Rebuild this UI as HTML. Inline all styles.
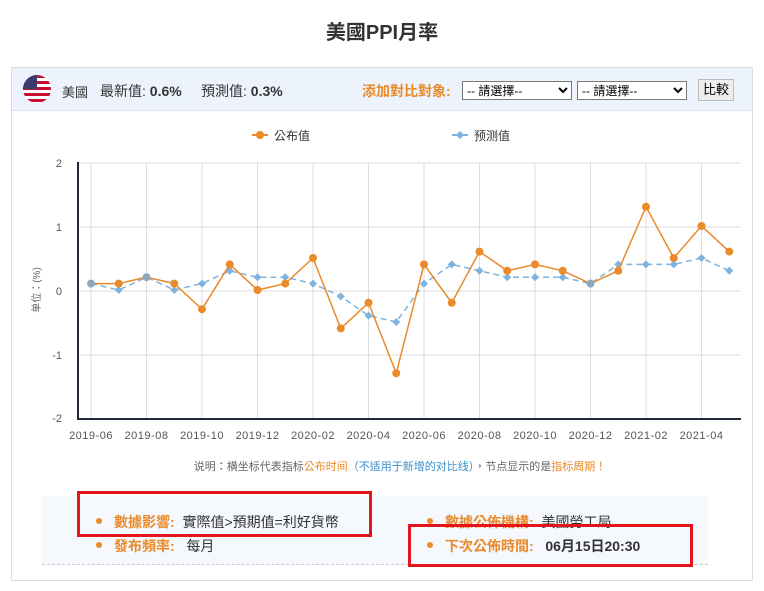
<!DOCTYPE html>
<html><head><meta charset="utf-8"><style>
body{margin:0;width:764px;height:591px;background:#fff;font-family:"Liberation Sans","Noto Sans CJK TC",sans-serif;position:relative;overflow:hidden}
.t{position:absolute;top:16px;left:0;width:764px;text-align:center;font-size:20px;font-weight:bold;color:#333}
.box{position:absolute;left:11px;top:67px;width:740px;height:512px;border:1px solid #d8dde6}
.hd{position:absolute;left:0;top:0;width:740px;height:42px;background:#edf3fc;border-bottom:1px solid #d8e2f0}
.a{position:absolute;font-size:14px;color:#333;white-space:nowrap}
select{position:absolute;height:19px;font-size:12px;border:1px solid #777;background:#fff;padding:0}
.btn{position:absolute;left:686px;top:11px;width:34px;height:20px;border:1px solid #bbb;background:#eee;font-size:13px;text-align:center;line-height:20px}
.info{position:absolute;background:#f5f8fd;border-bottom:1px dashed #ccc}
.o{color:#e98a2b;font-weight:bold}
.r{position:absolute;border:3px solid #e3141a}
.dot{display:inline-block;width:6px;height:6px;border-radius:50%;background:#e98a2b;margin-right:12px;vertical-align:3px}
</style></head><body>
<div class="t">美國PPI月率</div>
<div class="box">
<div class="hd">
<svg style="position:absolute;left:10px;top:6px" width="30" height="30"><defs><clipPath id="c"><circle cx="15" cy="15" r="14"/></clipPath></defs><g clip-path="url(#c)"><rect width="30" height="30" fill="#fff"/><rect y="1" width="30" height="3" fill="#c8102e"/><rect y="7" width="30" height="3" fill="#c8102e"/><rect y="13" width="30" height="3" fill="#c8102e"/><rect y="19" width="30" height="3" fill="#c8102e"/><rect y="25" width="30" height="3" fill="#c8102e"/><rect width="15" height="15" fill="#3c3b6e"/></g></svg>
<span class="a" style="left:50px;top:14px;font-size:13px">美國</span>
<span class="a" style="left:88px;top:13px">最新值: <b>0.6%</b></span>
<span class="a" style="left:189px;top:13px">預測值: <b>0.3%</b></span>
<span class="a o" style="left:350px;top:13px">添加對比對象:</span>
<select style="left:450px;top:13px;width:110px"><option>-- 請選擇--</option></select>
<select style="left:565px;top:13px;width:110px"><option>-- 請選擇--</option></select>
<div class="btn">比較</div>
</div>
</div>
<svg style="position:absolute;left:0;top:0" width="764" height="591" font-family="Liberation Sans,Noto Sans CJK TC,sans-serif">
<g stroke="#ddd" stroke-width="1">
<line x1="78" y1="163" x2="741" y2="163"/><line x1="78" y1="227" x2="741" y2="227"/><line x1="78" y1="291" x2="741" y2="291"/><line x1="78" y1="355" x2="741" y2="355"/>
<line x1="91" y1="163" x2="91" y2="418"/><line x1="146.5" y1="163" x2="146.5" y2="418"/><line x1="202" y1="163" x2="202" y2="418"/><line x1="257.5" y1="163" x2="257.5" y2="418"/><line x1="313" y1="163" x2="313" y2="418"/><line x1="368.5" y1="163" x2="368.5" y2="418"/><line x1="424" y1="163" x2="424" y2="418"/><line x1="479.5" y1="163" x2="479.5" y2="418"/><line x1="535" y1="163" x2="535" y2="418"/><line x1="590.5" y1="163" x2="590.5" y2="418"/><line x1="646" y1="163" x2="646" y2="418"/><line x1="701.5" y1="163" x2="701.5" y2="418"/>
</g>
<path d="M78 162V419H741" fill="none" stroke="#1f2a3c" stroke-width="2"/>
<g font-size="11" fill="#555" text-anchor="end"><text x="62" y="167">2</text><text x="62" y="231">1</text><text x="62" y="295">0</text><text x="62" y="359">-1</text><text x="62" y="422">-2</text></g>
<g font-size="11" fill="#555" text-anchor="middle" letter-spacing="0.5"><text x="91" y="439">2019-06</text><text x="146.5" y="439">2019-08</text><text x="202" y="439">2019-10</text><text x="257.5" y="439">2019-12</text><text x="313" y="439">2020-02</text><text x="368.5" y="439">2020-04</text><text x="424" y="439">2020-06</text><text x="479.5" y="439">2020-08</text><text x="535" y="439">2020-10</text><text x="590.5" y="439">2020-12</text><text x="646" y="439">2021-02</text><text x="701.5" y="439">2021-04</text></g>
<text transform="translate(40,290) rotate(-90)" font-size="10" fill="#666" text-anchor="middle">单位：(%)</text>
<line x1="252" y1="135" x2="268" y2="135" stroke="#e98a2b" stroke-width="2"/><circle cx="260" cy="135" r="4" fill="#e98a2b"/><text x="274" y="140" font-size="12" fill="#333">公布值</text>
<line x1="452" y1="135" x2="468" y2="135" stroke="#7fb3df" stroke-width="2"/><path d="M460 131l4 4-4 4-4-4z" fill="#7fb3df"/><text x="474" y="140" font-size="12" fill="#333">预测值</text>
<polyline fill="none" stroke="#7fb3df" stroke-width="1.5" stroke-dasharray="6,4" points="91,283.6 118.75,290 146.5,277.2 174.25,290 202,283.6 229.75,270.8 257.5,277.2 285.25,277.2 313,283.6 340.75,296.4 368.5,315.6 396.25,322 424,283.6 451.75,264.4 479.5,270.8 507.25,277.2 535,277.2 562.75,277.2 590.5,283.6 618.25,264.4 646,264.4 673.75,264.4 701.5,258 729.25,270.8"/>
<g fill="#7fb3df"><path d="M118.75 286l4 4-4 4-4-4z"/><path d="M174.25 286l4 4-4 4-4-4z"/><path d="M202 279.6l4 4-4 4-4-4z"/><path d="M229.75 266.8l4 4-4 4-4-4z"/><path d="M257.5 273.2l4 4-4 4-4-4z"/><path d="M285.25 273.2l4 4-4 4-4-4z"/><path d="M313 279.6l4 4-4 4-4-4z"/><path d="M340.75 292.4l4 4-4 4-4-4z"/><path d="M368.5 311.6l4 4-4 4-4-4z"/><path d="M396.25 318l4 4-4 4-4-4z"/><path d="M424 279.6l4 4-4 4-4-4z"/><path d="M451.75 260.4l4 4-4 4-4-4z"/><path d="M479.5 266.8l4 4-4 4-4-4z"/><path d="M507.25 273.2l4 4-4 4-4-4z"/><path d="M535 273.2l4 4-4 4-4-4z"/><path d="M562.75 273.2l4 4-4 4-4-4z"/><path d="M618.25 260.4l4 4-4 4-4-4z"/><path d="M646 260.4l4 4-4 4-4-4z"/><path d="M673.75 260.4l4 4-4 4-4-4z"/><path d="M701.5 254l4 4-4 4-4-4z"/><path d="M729.25 266.8l4 4-4 4-4-4z"/></g>
<polyline fill="none" stroke="#e98a2b" stroke-width="1.5" points="91,283.6 118.75,283.6 146.5,277.2 174.25,283.6 202,309.2 229.75,264.4 257.5,290 285.25,283.6 313,258 340.75,328.4 368.5,302.8 396.25,373.2 424,264.4 451.75,302.8 479.5,251.6 507.25,270.8 535,264.4 562.75,270.8 590.5,283.6 618.25,270.8 646,206.8 673.75,258 701.5,226 729.25,251.6"/>
<g fill="#e98a2b"><circle cx="118.75" cy="283.6" r="4"/><circle cx="174.25" cy="283.6" r="4"/><circle cx="202" cy="309.2" r="4"/><circle cx="229.75" cy="264.4" r="4"/><circle cx="257.5" cy="290" r="4"/><circle cx="285.25" cy="283.6" r="4"/><circle cx="313" cy="258" r="4"/><circle cx="340.75" cy="328.4" r="4"/><circle cx="368.5" cy="302.8" r="4"/><circle cx="396.25" cy="373.2" r="4"/><circle cx="424" cy="264.4" r="4"/><circle cx="451.75" cy="302.8" r="4"/><circle cx="479.5" cy="251.6" r="4"/><circle cx="507.25" cy="270.8" r="4"/><circle cx="535" cy="264.4" r="4"/><circle cx="562.75" cy="270.8" r="4"/><circle cx="618.25" cy="270.8" r="4"/><circle cx="646" cy="206.8" r="4"/><circle cx="673.75" cy="258" r="4"/><circle cx="701.5" cy="226" r="4"/><circle cx="729.25" cy="251.6" r="4"/></g>
<g fill="#8fa7bd"><circle cx="91" cy="283.6" r="4"/><circle cx="146.5" cy="277.2" r="4"/><circle cx="590.5" cy="283.6" r="4"/></g>
<text x="400" y="470" font-size="11" fill="#666" text-anchor="middle">说明：横坐标代表指标<tspan fill="#e98a2b">公布时间</tspan><tspan fill="#3a8fc9">（不适用于新增的对比线）</tspan>，节点显示的是<tspan fill="#e98a2b">指标周期</tspan><tspan fill="#e98a2b">！</tspan></text>
</svg>
<div class="info" style="left:42px;top:496px;width:666px;height:68px"></div>
<div class="a" style="left:96px;top:512px"><span class="dot"></span><span class="o">數據影響:</span>&nbsp; 實際值&gt;預期值=利好貨幣</div>
<div class="a" style="left:96px;top:536px"><span class="dot"></span><span class="o">發布頻率:</span>&nbsp;&nbsp; 每月</div>
<div class="a" style="left:427px;top:512px"><span class="dot"></span><span class="o">數據公佈機構:</span>&nbsp; 美國勞工局</div>
<div class="a" style="left:427px;top:536px"><span class="dot"></span><span class="o">下次公佈時間:</span>&nbsp;&nbsp; <b>06月15日20:30</b></div>
<div class="r" style="left:77px;top:491px;width:289px;height:40px"></div>
<div class="r" style="left:408px;top:524px;width:279px;height:37px"></div>
</body></html>
